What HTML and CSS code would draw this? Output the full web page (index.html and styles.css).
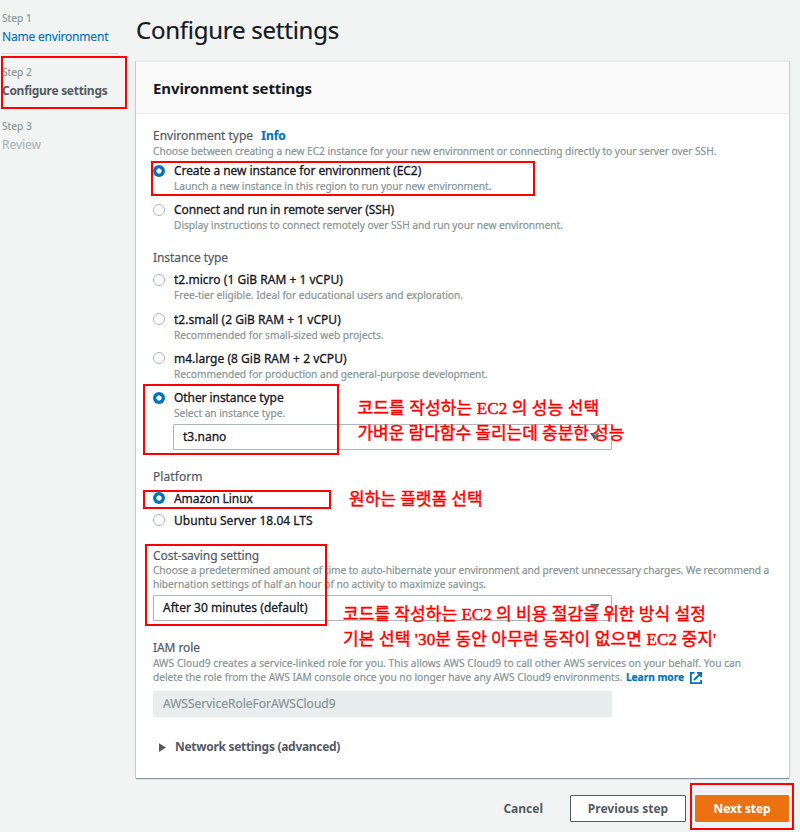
FILE: index.html
```html
<!DOCTYPE html>
<html lang="en">
<head>
<meta charset="utf-8">
<title>Configure settings</title>
<link rel="stylesheet" href="styles.css">
</head>
<body>
<div class="app">
  <nav class="steps">
    <div class="step"><small>Step 1</small><a class="step-link">Name environment</a></div>
    <div class="step current"><small>Step 2</small><b>Configure settings</b></div>
    <div class="step disabled"><small>Step 3</small><span>Review</span></div>
  </nav>

  <main class="content">
    <h1>Configure settings</h1>
    <section class="panel">
      <h2>Environment settings</h2>
      <div class="panel-body">
        <div class="field">
          <div class="label">Environment type <a class="info">Info</a></div>
          <p class="desc">Choose between creating a new EC2 instance for your new environment or connecting directly to your server over SSH.</p>
          <div class="options">
            <div class="option"><i class="radio on"></i><div><div class="name snug">Create a new instance for environment (EC2)</div><p class="desc">Launch a new instance in this region to run your new environment.</p></div></div>
            <div class="option"><i class="radio"></i><div><div class="name snug">Connect and run in remote server (SSH)</div><p class="desc">Display instructions to connect remotely over SSH and run your new environment.</p></div></div>
          </div>
        </div>

        <div class="field instance">
          <div class="label snug">Instance type</div>
          <div class="options">
            <div class="option"><i class="radio"></i><div><div class="name">t2.micro (1 GiB RAM + 1 vCPU)</div><p class="desc">Free-tier eligible. Ideal for educational users and exploration.</p></div></div>
            <div class="option"><i class="radio"></i><div><div class="name">t2.small (2 GiB RAM + 1 vCPU)</div><p class="desc">Recommended for small-sized web projects.</p></div></div>
            <div class="option"><i class="radio"></i><div><div class="name">m4.large (8 GiB RAM + 2 vCPU)</div><p class="desc">Recommended for production and general-purpose development.</p></div></div>
            <div class="option"><i class="radio on"></i><div><div class="name snug">Other instance type</div><p class="desc">Select an instance type.</p></div></div>
          </div>
          <div class="select indented"><span>t3.nano</span><svg class="caret" viewBox="0 0 10 8"><path d="M0 0h9.5L4.75 7.5z"/></svg></div>
        </div>

        <div class="field platform">
          <div class="label wide">Platform</div>
          <div class="options">
            <div class="option"><i class="radio on"></i><div class="name snug">Amazon Linux</div></div>
            <div class="option"><i class="radio"></i><div class="name">Ubuntu Server 18.04 LTS</div></div>
          </div>
        </div>

        <div class="field cost">
          <div class="label snug">Cost-saving setting</div>
          <p class="desc"><span class="dense">Choose a predetermined amount of time to auto-hibernate your environment and prevent unnecessary charges. We recommend a</span><br><span>hibernation settings of half an hour of no activity to maximize savings.</span></p>
          <div class="select"><span>After 30 minutes (default)</span><svg class="caret" viewBox="0 0 10 8"><path d="M0 0h9.5L4.75 7.5z"/></svg></div>
        </div>

        <div class="field iam">
          <div class="label snug">IAM role</div>
          <p class="desc"><span class="even">AWS Cloud9 creates a service-linked role for you. This allows AWS Cloud9 to call other AWS services on your behalf. You can</span><br><span class="role">delete the role from the AWS IAM console once you no longer have any AWS Cloud9 environments.</span> <a class="learn">Learn more<svg class="external" viewBox="0 0 12 12"><path d="M4.5 .9H.9v10.2h10.2V8M7 .9h4.1V5M11 1 4 8"/></svg></a></p>
          <div class="readonly">AWSServiceRoleForAWSCloud9</div>
        </div>

        <div class="network"><svg viewBox="0 0 8 10"><path d="M0 0v10l8-5z"/></svg><span>Network settings (advanced)</span></div>
      </div>
    </section>

    <footer class="actions">
      <a class="cancel">Cancel</a>
      <button class="button">Previous step</button>
      <button class="button primary">Next step</button>
    </footer>
  </main>
</div>

<div class="mark mark-step"></div>
<div class="mark mark-create"></div>
<div class="mark mark-other"></div>
<div class="mark mark-linux"></div>
<div class="mark mark-cost"></div>
<div class="mark mark-next"></div>
<div class="note note-instance" lang="ko"><span class="n1">코드를 작성하는 EC2 의 성능 선택</span><br><span class="n2">가벼운 람다함수 돌리는데 충분한 성능</span></div>
<div class="note note-platform" lang="ko">원하는 플랫폼 선택</div>
<div class="note note-cost" lang="ko"><span>코드를 작성하는 EC2 의 비용 절감을 위한 방식 설정</span><br><span class="n1">기본 선택 '30분 동안 아무런 동작이 없으면 EC2 중지'</span></div>
</body>
</html>
```
FILE: styles.css
```css
* { box-sizing: border-box; }
body {
  margin: 0;
  background: #f2f3f3;
  color: #16191f;
  font: 12px/18px "Noto Sans", "Open Sans", sans-serif;
}
h1, h2, p { margin: 0; }
.app { display: flex; width: 800px; height: 832px; overflow: hidden; }

/* Wizard steps */
.steps { width: 136px; padding: 9px 18px 0 2px; flex: none; }
.step { height: 54px; display: flex; flex-direction: column; }
.step:first-child { height: 45px; border-bottom: 1px solid #d5dbdb; margin-bottom: 9px; }
.step small { font-size: 10.2px; line-height: 18px; margin-bottom: 1px; color: #879596; -webkit-text-stroke: .15px; }
.step-link { color: #0073bb; letter-spacing: -.2px; -webkit-text-stroke: .15px; }
.step b { color: #545b64; letter-spacing: -.29px; white-space: nowrap; }
.disabled span { color: #aab7b8; letter-spacing: -.05px; -webkit-text-stroke: .15px; }

/* Panel */
.content { width: 653px; }
h1 { height: 61px; padding: 14px 0 0; font-size: 24px; line-height: 32px; font-weight: 400; letter-spacing: -.25px; -webkit-text-stroke: .2px; }
.panel {
  height: 717px;
  background: #fff;
  border-top: 1px solid #eaeded;
  box-shadow: 0 1px 1px #87959e, 1px 0 1px #d5dbdb, -1px 0 1px #d5dbdb;
}
h2 {
  height: 52px;
  padding-left: 17px;
  background: #fafafa;
  border-bottom: 1px solid #eaeded;
  font-size: 15px;
  line-height: 52px;
  letter-spacing: -.11px;
}
.panel-body { padding: 13px 17px 0; }
.label { line-height: 17px; color: #545b64; -webkit-text-stroke: .2px; }
.info { margin-left: 5px; color: #0073bb; font-weight: 700; }
.desc {
  font-size: 10.2px;
  line-height: 14px;
  letter-spacing: -.037px;
  color: #879596;
  white-space: nowrap;
  -webkit-text-stroke: .2px;
}
.options { display: grid; gap: 8.3px; padding-top: 4px; }
.option { display: flex; gap: 9px; }
.option .desc { line-height: 13px; }
.name { letter-spacing: .02px; -webkit-text-stroke: .3px; }
.snug { letter-spacing: -.07px; }
.wide { letter-spacing: .08px; }
.dense { letter-spacing: -.068px; }
.even { letter-spacing: .018px; }
.role { letter-spacing: -.02px; }
.radio {
  flex: none;
  width: 12px;
  height: 12px;
  margin-top: 2.5px;
  border: 1px solid #aab7b8;
  border-radius: 50%;
  background: #fff;
}
.radio.on { border: none; background: radial-gradient(circle, #fff 2.2px, #0073bb 3px); }
.select {
  display: flex;
  align-items: center;
  justify-content: space-between;
  width: 459px;
  height: 26px;
  margin-top: 4px;
  padding: 0 11px 0 9px;
  border: 1px solid #aab7b8;
  border-radius: 1px;
  letter-spacing: .02px;
  -webkit-text-stroke: .3px;
}
.select.indented { width: 439px; margin-left: 20px; }
.caret { width: 10px; height: 8px; fill: #545b64; stroke: none; }
.instance { margin-top: 17px; }
.instance .options { padding-top: 5px; }
.platform { margin-top: 18px; }
.platform .options { gap: 4px; padding-top: 4.5px; }
.cost { margin-top: 17.5px; }
.cost .desc { line-height: 13.5px; }
.iam { margin-top: 17.5px; }
.learn { margin-left: 1px; color: #0073bb; font-weight: 700; letter-spacing: -.03px; }
.external { width: 12px; height: 12px; margin-left: 6px; vertical-align: -3px; fill: none; stroke: #0073bb; stroke-width: 1.8; }
.readonly {
  width: 459px;
  height: 26px;
  margin-top: 7.5px;
  padding-left: 10px;
  border-radius: 1px;
  background: #eaeded;
  color: #879596;
  line-height: 26px;
  letter-spacing: 0;
  -webkit-text-stroke: .2px;
}
.network {
  display: flex;
  align-items: center;
  gap: 9px;
  margin: 21px 0 0 6px;
  color: #545b64;
  font-weight: 700;
  letter-spacing: -.3px;
}
.network svg { width: 7px; height: 9px; fill: #545b64; }

/* Footer */
.actions { display: flex; justify-content: flex-end; align-items: center; padding-top: 17px; }
.cancel { margin-right: 27px; color: #545b64; font-weight: 700; }
.button {
  width: 116px;
  height: 27px;
  padding: 0;
  border: 1px solid #545b64;
  border-radius: 1px;
  background: #fff;
  color: #545b64;
  font: 700 12px/20px "Noto Sans", "Open Sans", sans-serif;
}
.primary { width: 94px; margin-left: 9px; border-color: #ec7211; background: #ec7211; color: #fff; letter-spacing: -.1px; }

/* Annotations laid over the page */
.mark { position: absolute; border: 2px solid #f00; }
.mark-step { left: 1px; top: 56px; width: 126px; height: 53px; }
.mark-create { left: 151px; top: 161px; width: 384px; height: 35px; }
.mark-other { left: 143px; top: 384px; width: 196px; height: 71px; }
.mark-linux { left: 143px; top: 490px; width: 188px; height: 19px; }
.mark-cost { left: 145px; top: 544px; width: 182px; height: 82px; }
.mark-next { left: 690px; top: 783px; width: 104px; height: 47px; }
.note {
  position: absolute;
  color: #f00;
  font: 17px/25px "Liberation Serif", "Noto Sans CJK KR", serif;
  white-space: nowrap;
  -webkit-text-stroke: .45px;
  text-shadow: 0 0 2px #fff, 0 1px 1px rgba(255, 255, 255, .8);
}
.note-instance { left: 357.5px; top: 396px; }
.note-platform { left: 349px; top: 487px; }
.note-cost { left: 343px; top: 602px; letter-spacing: .05px; }
.n1 { letter-spacing: .13px; }
.n2 { letter-spacing: -.02px; }
```
